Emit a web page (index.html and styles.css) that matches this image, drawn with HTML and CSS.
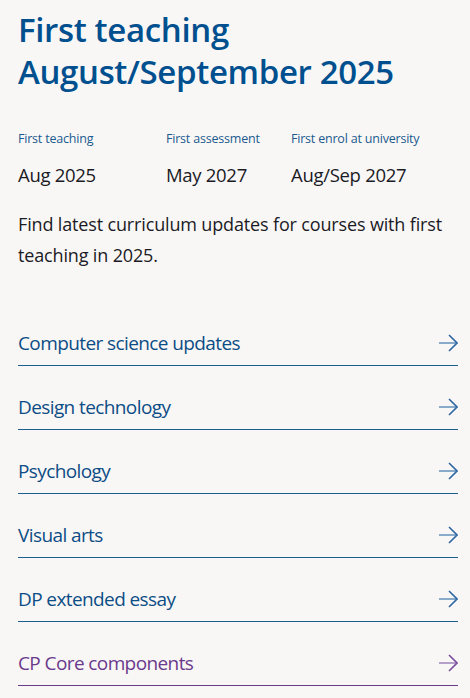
FILE: index.html
```html
<!DOCTYPE html>
<html lang="en">
<head>
<meta charset="utf-8">
<link rel="stylesheet" href="styles.css">
</head>
<body>
<main class="page">
  <h1 class="title">First teaching August/September 2025</h1>
  <div class="dates">
    <div class="date">
      <div class="label">First teaching</div>
      <div class="value">Aug 2025</div>
    </div>
    <div class="date">
      <div class="label">First assessment</div>
      <div class="value">May 2027</div>
    </div>
    <div class="date">
      <div class="label">First enrol at university</div>
      <div class="value">Aug/Sep 2027</div>
    </div>
  </div>
  <p class="intro">Find latest curriculum updates for courses with first teaching in 2025.</p>
  <ul class="links">
    <li><a class="link" href="#"><span>Computer science updates</span><svg class="arrow" viewBox="0 0 20 20"><path class="shaft" d="M1 10H19"/><path class="head" d="M11 2L19 10L11 18"/></svg></a></li>
    <li><a class="link" href="#"><span>Design technology</span><svg class="arrow" viewBox="0 0 20 20"><path class="shaft" d="M1 10H19"/><path class="head" d="M11 2L19 10L11 18"/></svg></a></li>
    <li><a class="link" href="#"><span>Psychology</span><svg class="arrow" viewBox="0 0 20 20"><path class="shaft" d="M1 10H19"/><path class="head" d="M11 2L19 10L11 18"/></svg></a></li>
    <li><a class="link" href="#"><span>Visual arts</span><svg class="arrow" viewBox="0 0 20 20"><path class="shaft" d="M1 10H19"/><path class="head" d="M11 2L19 10L11 18"/></svg></a></li>
    <li><a class="link" href="#"><span>DP extended essay</span><svg class="arrow" viewBox="0 0 20 20"><path class="shaft" d="M1 10H19"/><path class="head" d="M11 2L19 10L11 18"/></svg></a></li>
    <li><a class="link purple" href="#"><span>CP Core components</span><svg class="arrow" viewBox="0 0 20 20"><path class="shaft" d="M1 10H19"/><path class="head" d="M11 2L19 10L11 18"/></svg></a></li>
  </ul>
</main>
</body>
</html>
```

FILE: styles.css
```css
html, body {
  margin: 0;
  background: #f9f7f6;
}
body {
  font-family: "Open Sans", "Noto Sans", sans-serif;
  color: #1b1b25;
}
.page {
  padding: 9px 12px 0 18px;
}
.title {
  margin: 0;
  font-size: 33px;
  line-height: 42px;
  font-weight: 600;
  color: #00508f;
  letter-spacing: -0.35px;
  max-width: 410px;
}
.dates {
  display: grid;
  grid-template-columns: 148px 125px 1fr;
  margin-top: 38px;
}
.label {
  font-size: 12.5px;
  line-height: 16px;
  color: #1a5a8e;
  letter-spacing: -0.2px;
}
.value {
  margin-top: 16px;
  font-size: 18.5px;
  line-height: 24px;
  letter-spacing: -0.3px;
}
.intro {
  margin: 22px 0 0;
  font-size: 18px;
  line-height: 31px;
  letter-spacing: -0.15px;
}
.links {
  list-style: none;
  margin: 61px 0 0;
  padding: 0;
  display: flex;
  flex-direction: column;
  gap: 30px;
}
.link {
  display: flex;
  justify-content: space-between;
  align-items: center;
  padding: 0 0 11px;
  border-bottom: 1.5px solid #1b5f8f;
  text-decoration: none;
  color: #0d4d85;
  font-size: 19px;
  line-height: 22px;
  font-weight: 500;
  letter-spacing: -0.6px;
}
.arrow {
  width: 20px;
  height: 20px;
  fill: none;
  stroke-width: 1.6;
}
.arrow .shaft { stroke: #6f97c2; }
.arrow .head { stroke: #2e66a3; }
.link.purple {
  color: #6a3a8c;
  border-bottom-color: #6a3a8c;
}
.link.purple .shaft { stroke: #a68bc0; }
.link.purple .head { stroke: #7a4c9c; }
```
